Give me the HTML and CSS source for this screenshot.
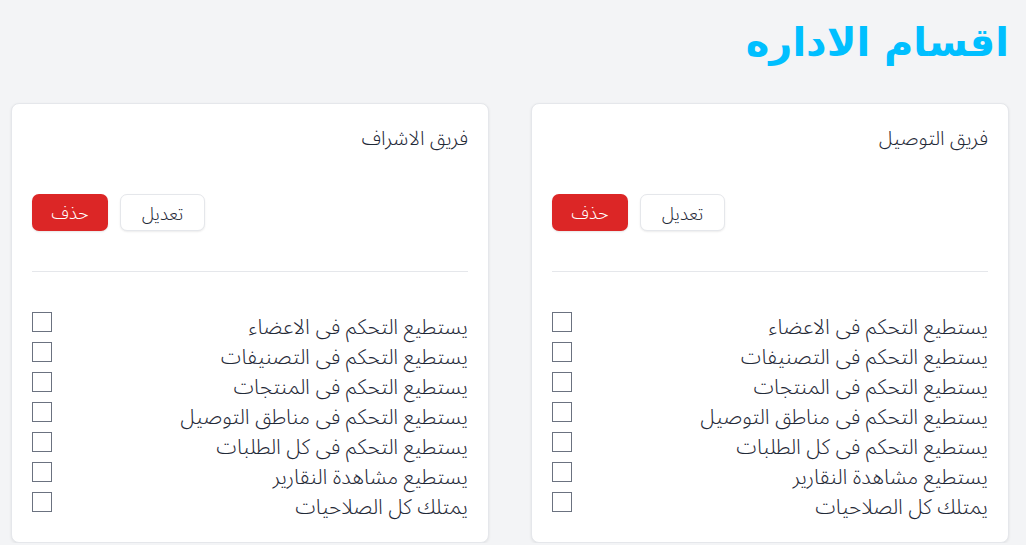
FILE: index.html
```html
<!DOCTYPE html>
<html lang="ar" dir="rtl">
<head>
<meta charset="utf-8">
<title>اقسام الاداره</title>
<link rel="stylesheet" href="styles.css">
</head>
<body>
<div class="page">
  <h1 class="page-title">اقسام الاداره</h1>
  <div class="cards">
    <section class="card">
      <h2 class="card-title">فريق التوصيل</h2>
      <div class="actions">
        <button class="btn btn-edit">تعديل</button>
        <button class="btn btn-delete">حذف</button>
      </div>
      <hr class="divider">
      <ul class="perms">
        <li class="perm"><span class="perm-label">يستطيع التحكم فى الاعضاء</span><span class="box"></span></li>
        <li class="perm"><span class="perm-label">يستطيع التحكم فى التصنيفات</span><span class="box"></span></li>
        <li class="perm"><span class="perm-label">يستطيع التحكم فى المنتجات</span><span class="box"></span></li>
        <li class="perm"><span class="perm-label">يستطيع التحكم فى مناطق التوصيل</span><span class="box"></span></li>
        <li class="perm"><span class="perm-label">يستطيع التحكم فى كل الطلبات</span><span class="box"></span></li>
        <li class="perm"><span class="perm-label">يستطيع مشاهدة النقارير</span><span class="box"></span></li>
        <li class="perm"><span class="perm-label">يمتلك كل الصلاحيات</span><span class="box"></span></li>
      </ul>
    </section>
    <section class="card">
      <h2 class="card-title">فريق الاشراف</h2>
      <div class="actions">
        <button class="btn btn-edit">تعديل</button>
        <button class="btn btn-delete">حذف</button>
      </div>
      <hr class="divider">
      <ul class="perms">
        <li class="perm"><span class="perm-label">يستطيع التحكم فى الاعضاء</span><span class="box"></span></li>
        <li class="perm"><span class="perm-label">يستطيع التحكم فى التصنيفات</span><span class="box"></span></li>
        <li class="perm"><span class="perm-label">يستطيع التحكم فى المنتجات</span><span class="box"></span></li>
        <li class="perm"><span class="perm-label">يستطيع التحكم فى مناطق التوصيل</span><span class="box"></span></li>
        <li class="perm"><span class="perm-label">يستطيع التحكم فى كل الطلبات</span><span class="box"></span></li>
        <li class="perm"><span class="perm-label">يستطيع مشاهدة النقارير</span><span class="box"></span></li>
        <li class="perm"><span class="perm-label">يمتلك كل الصلاحيات</span><span class="box"></span></li>
      </ul>
    </section>
  </div>
</div>
</body>
</html>
```
FILE: styles.css
```css
* { box-sizing: border-box; }
html, body { margin: 0; padding: 0; }
body {
  background: #f3f4f6;
  font-family: "Noto Sans Arabic", "Noto Sans", "DejaVu Sans", sans-serif;
  color: #1f2937;
  direction: rtl;
}
.page {
  padding: 14px 17px 0 11px;
}
.page-title {
  margin: 0;
  font-family: "DejaVu Sans", sans-serif;
  font-size: 40px;
  line-height: 56px;
  font-weight: 700;
  color: #00bfff;
}
.cards {
  margin-top: 33px;
  display: grid;
  grid-template-columns: 1fr 1fr;
  gap: 42px;
}
.card {
  background: #fff;
  border: 1px solid #e5e7eb;
  border-radius: 8px;
  box-shadow: 0 1px 3px rgba(0,0,0,0.08);
  padding: 20px 20px 20px 20px;
}
.card-title {
  margin: 0;
  font-size: 20px;
  font-weight: 300;
  line-height: 30px;
}
.actions {
  margin-top: 40px;
  display: flex;
  justify-content: flex-end;
  gap: 12px;
}
.btn {
  font-family: inherit;
  font-size: 18px;
  font-weight: 300;
  height: 37px;
  border-radius: 7px;
  cursor: pointer;
  padding: 0;
}
.btn-edit {
  width: 85px;
  background: #fff;
  border: 1px solid #e5e7eb;
  box-shadow: 0 1px 2px rgba(0,0,0,0.08);
  color: #1f2937;
}
.btn-delete {
  width: 76px;
  background: #dc2626;
  border: none;
  color: #fff;
  box-shadow: 0 1px 2px rgba(0,0,0,0.1);
}
.divider {
  margin: 40px 0 0;
  border: none;
  border-top: 1px solid #e5e7eb;
}
.perms {
  list-style: none;
  margin: 40px 0 0;
  padding: 0;
}
.perm {
  display: flex;
  justify-content: space-between;
  align-items: flex-start;
  height: 30px;
}
.perm-label {
  font-size: 21px;
  font-weight: 300;
  line-height: 28px;
  margin-top: 1px;
  white-space: nowrap;
}
.box {
  width: 20px;
  height: 20px;
  border: 1px solid #6b7280;
  background: #fff;
  flex: none;
}
```
